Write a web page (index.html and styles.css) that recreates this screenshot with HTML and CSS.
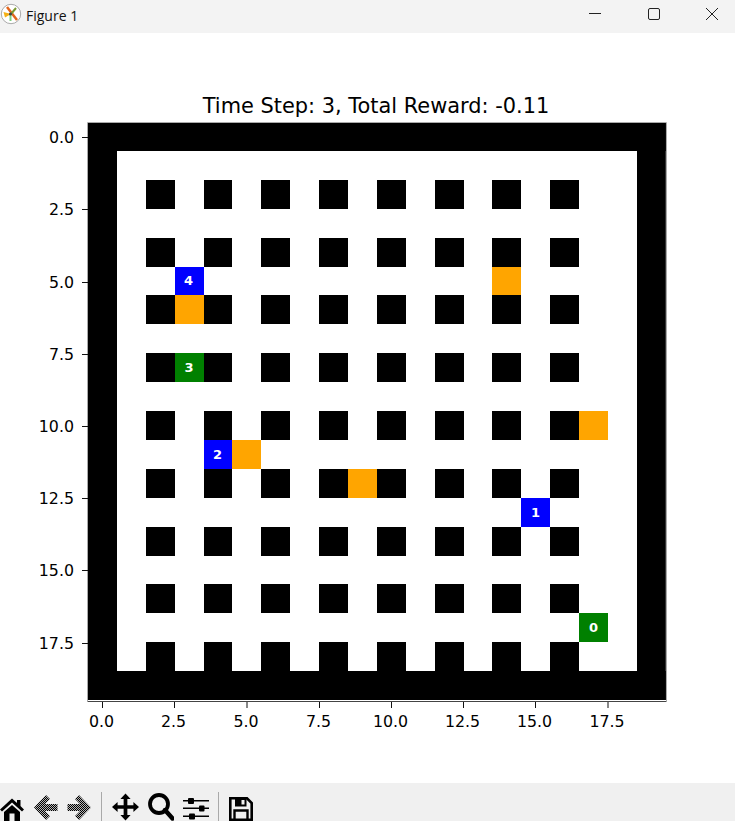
FILE: index.html
```html
<!DOCTYPE html>
<html lang="en">
<head>
  <meta charset="UTF-8" />
  <meta name="viewport" content="width=device-width, initial-scale=1" />
  <title>Figure 1</title>
  <link rel="stylesheet" href="styles.css">
</head>
<body>
  <div class="window">
    <header class="titlebar">
      <svg class="app-icon" width="22" height="22" viewBox="0 0 22 22">
        <circle cx="11" cy="11" r="9.7" fill="#fff" stroke="#aaa" />
        <path d="M3.5 9 L11 11 L5 14.5 Z" fill="#f5b014" />
        <path d="M7 4 L17 17" stroke="#e2651c" stroke-width="2.5" />
        <path d="M11 11 L16 5" stroke="#7a9a2e" stroke-width="2" />
        <path d="M10.5 11 L10.5 18" stroke="#7ed07e" stroke-width="2" />
        <circle cx="10.5" cy="11" r="1.6" fill="#444" />
      </svg>
      <span class="window-title">Figure 1</span>
      <div class="window-controls">
        <svg width="14" height="14" viewBox="0 0 14 14"><path d="M1 6.5H13" /></svg>
        <svg width="14" height="14" viewBox="0 0 14 14"><rect x="1.5" y="1.5" width="11" height="11" rx="1.5" /></svg>
        <svg width="14" height="14" viewBox="0 0 14 14"><path d="M1 1L13 13M13 1L1 13" /></svg>
      </div>
    </header>

    <main class="figure">
      <svg class="plot" width="735" height="750" viewBox="0 0 735 750">
        <text class="plot-title" x="376" y="80">Time Step: 3, Total Reward: -0.11</text>

        <!-- grid cells in data units, one unit = one cell -->
        <svg x="88" y="89" width="577.8" height="578" viewBox="0 0 20 20" preserveAspectRatio="none" shape-rendering="crispEdges">
          <rect width="20" height="20" fill="#fff" />
          <g fill="#000">
            <rect width="20" height="1" />
            <rect y="19" width="20" height="1" />
            <rect width="1" height="20" />
            <rect x="19" width="1" height="20" />
            <rect x="2" y="2" width="1" height="1" /><rect x="4" y="2" width="1" height="1" /><rect x="6" y="2" width="1" height="1" /><rect x="8" y="2" width="1" height="1" /><rect x="10" y="2" width="1" height="1" /><rect x="12" y="2" width="1" height="1" /><rect x="14" y="2" width="1" height="1" /><rect x="16" y="2" width="1" height="1" />
            <rect x="2" y="4" width="1" height="1" /><rect x="4" y="4" width="1" height="1" /><rect x="6" y="4" width="1" height="1" /><rect x="8" y="4" width="1" height="1" /><rect x="10" y="4" width="1" height="1" /><rect x="12" y="4" width="1" height="1" /><rect x="14" y="4" width="1" height="1" /><rect x="16" y="4" width="1" height="1" />
            <rect x="2" y="6" width="1" height="1" /><rect x="4" y="6" width="1" height="1" /><rect x="6" y="6" width="1" height="1" /><rect x="8" y="6" width="1" height="1" /><rect x="10" y="6" width="1" height="1" /><rect x="12" y="6" width="1" height="1" /><rect x="14" y="6" width="1" height="1" /><rect x="16" y="6" width="1" height="1" />
            <rect x="2" y="8" width="1" height="1" /><rect x="4" y="8" width="1" height="1" /><rect x="6" y="8" width="1" height="1" /><rect x="8" y="8" width="1" height="1" /><rect x="10" y="8" width="1" height="1" /><rect x="12" y="8" width="1" height="1" /><rect x="14" y="8" width="1" height="1" /><rect x="16" y="8" width="1" height="1" />
            <rect x="2" y="10" width="1" height="1" /><rect x="4" y="10" width="1" height="1" /><rect x="6" y="10" width="1" height="1" /><rect x="8" y="10" width="1" height="1" /><rect x="10" y="10" width="1" height="1" /><rect x="12" y="10" width="1" height="1" /><rect x="14" y="10" width="1" height="1" /><rect x="16" y="10" width="1" height="1" />
            <rect x="2" y="12" width="1" height="1" /><rect x="4" y="12" width="1" height="1" /><rect x="6" y="12" width="1" height="1" /><rect x="8" y="12" width="1" height="1" /><rect x="10" y="12" width="1" height="1" /><rect x="12" y="12" width="1" height="1" /><rect x="14" y="12" width="1" height="1" /><rect x="16" y="12" width="1" height="1" />
            <rect x="2" y="14" width="1" height="1" /><rect x="4" y="14" width="1" height="1" /><rect x="6" y="14" width="1" height="1" /><rect x="8" y="14" width="1" height="1" /><rect x="10" y="14" width="1" height="1" /><rect x="12" y="14" width="1" height="1" /><rect x="14" y="14" width="1" height="1" /><rect x="16" y="14" width="1" height="1" />
            <rect x="2" y="16" width="1" height="1" /><rect x="4" y="16" width="1" height="1" /><rect x="6" y="16" width="1" height="1" /><rect x="8" y="16" width="1" height="1" /><rect x="10" y="16" width="1" height="1" /><rect x="12" y="16" width="1" height="1" /><rect x="14" y="16" width="1" height="1" /><rect x="16" y="16" width="1" height="1" />
            <rect x="2" y="18" width="1" height="1" /><rect x="4" y="18" width="1" height="1" /><rect x="6" y="18" width="1" height="1" /><rect x="8" y="18" width="1" height="1" /><rect x="10" y="18" width="1" height="1" /><rect x="12" y="18" width="1" height="1" /><rect x="14" y="18" width="1" height="1" /><rect x="16" y="18" width="1" height="1" />
          </g>
          <!-- goals -->
          <g fill="#ffa500">
            <rect x="3" y="6" width="1" height="1" />
            <rect x="14" y="5" width="1" height="1" />
            <rect x="17" y="10" width="1" height="1" />
            <rect x="5" y="11" width="1" height="1" />
            <rect x="9" y="12" width="1" height="1" />
          </g>
          <!-- agents -->
          <rect x="17" y="17" width="1" height="1" fill="#008000" />
          <rect x="15" y="13" width="1" height="1" fill="#0000ff" />
          <rect x="4" y="11" width="1" height="1" fill="#0000ff" />
          <rect x="3" y="8" width="1" height="1" fill="#008000" />
          <rect x="3" y="5" width="1" height="1" fill="#0000ff" />
        </svg>

        <text class="agent-label" x="593.5" y="599">0</text>
        <text class="agent-label" x="535.5" y="484">1</text>
        <text class="agent-label" x="217.5" y="426">2</text>
        <text class="agent-label" x="189" y="339">3</text>
        <text class="agent-label" x="188.5" y="252">4</text>

        <path class="spines spine-light" d="M87.5 89.5H666.5V668M87.5 89.5V668" />
        <path class="spines" d="M87.5 668.5H666.5" />

        <path class="ticks" d="M82 104.5H88M82 176.5H88M82 249.5H88M82 321.5H88M82 393.5H88M82 465.5H88M82 537.5H88M82 610.5H88" />
        <path class="ticks" d="M102.5 669V675M174.5 669V675M247 669V675M319.5 669V675M391.5 669V675M463.5 669V675M535.5 669V675M608 669V675" />

        <g class="y-labels">
          <text x="74" y="110">0.0</text>
          <text x="74" y="182">2.5</text>
          <text x="74" y="255">5.0</text>
          <text x="74" y="327">7.5</text>
          <text x="74" y="399">10.0</text>
          <text x="74" y="471">12.5</text>
          <text x="74" y="543">15.0</text>
          <text x="74" y="616">17.5</text>
        </g>
        <g class="x-labels">
          <text x="101.5" y="694">0.0</text>
          <text x="173.5" y="694">2.5</text>
          <text x="246" y="694">5.0</text>
          <text x="318.5" y="694">7.5</text>
          <text x="390.5" y="694">10.0</text>
          <text x="462.5" y="694">12.5</text>
          <text x="534.5" y="694">15.0</text>
          <text x="607" y="694">17.5</text>
        </g>
      </svg>
    </main>

    <footer class="toolbar">
      <svg class="tool tool-home" width="24" height="24" viewBox="0 0 24 24">
        <path d="M12 1.5 L17 6 V3 H20.5 V9 L24 12.5 L22 14.5 L12 5.5 L2 14.5 L0 12.5 Z" />
        <path d="M12 8 L20 15 V24 H14.5 V16.5 H9.5 V24 H4 V15 Z" />
      </svg>
      <svg class="tool tool-back" width="24" height="25" viewBox="0 0 24 25">
        <path d="M12 0 L16 4 L11 9 H23.5 V16 H11 L16 21 L12 25 L0 12.5 Z" fill="url(#dither)" />
      </svg>
      <svg class="tool tool-forward" width="24" height="25" viewBox="0 0 24 25">
        <path d="M12 0 L8 4 L13 9 H0.5 V16 H13 L8 21 L12 25 L24 12.5 Z" fill="url(#dither)" />
      </svg>
      <span class="tool-sep"></span>
      <svg class="tool tool-move" width="27" height="28" viewBox="0 0 29 29">
        <path d="M14.5 0 L20 6 H16.5 V12.5 H23 V9 L29 14.5 L23 20 V16.5 H16.5 V23 H20 L14.5 29 L9 23 H12.5 V16.5 H6 V20 L0 14.5 L6 9 V12.5 H12.5 V6 H9 Z" />
      </svg>
      <svg class="tool tool-zoom" width="26" height="28" viewBox="0 0 26 28">
        <circle cx="11" cy="11" r="9" fill="none" stroke="#000" stroke-width="3.8" />
        <path d="M17 17 L24.5 25.5" fill="none" stroke="#000" stroke-width="4.4" stroke-linecap="round" />
      </svg>
      <svg class="tool tool-sliders" width="26" height="24" viewBox="0 0 26 24">
        <path d="M0 3H26V4.5H0ZM0 10.5H26V12H0ZM0 18.5H26V20H0Z" />
        <rect x="5" y="1" width="6" height="6" rx="1" />
        <rect x="16" y="8.5" width="5.5" height="6" rx="1" />
        <rect x="6" y="16.5" width="6" height="6" rx="1" />
      </svg>
      <span class="tool-sep"></span>
      <svg class="tool tool-save" width="24" height="24" viewBox="0 0 24 24">
        <path d="M1.3 1.3 H18 L22.7 6 V22.7 H1.3 Z" fill="none" stroke="#000" stroke-width="2.6" />
        <path d="M6 1 H17.5 V9.5 H6 Z M12.5 3 V7.5 H15.5 V3 Z" fill-rule="evenodd" />
        <path d="M5.5 22.5 V13.5 H18.5 V22.5" fill="none" stroke="#000" stroke-width="2.4" />
      </svg>
      <svg width="0" height="0" class="defs">
        <defs>
          <pattern id="dither" width="2" height="2" patternUnits="userSpaceOnUse">
            <rect width="2" height="2" fill="#b4b4b4" />
            <rect width="1" height="1" fill="#000" />
            <rect x="1" y="1" width="1" height="1" fill="#000" />
          </pattern>
        </defs>
      </svg>
    </footer>
  </div>
</body>
</html>
```

FILE: styles.css
```css
html, body {
  margin: 0;
  padding: 0;
  background: #fff;
}
.window {
  display: flex;
  flex-direction: column;
  width: 735px;
  height: 821px;
  overflow: hidden;
}
.titlebar {
  display: flex;
  align-items: center;
  flex: none;
  height: 33px;
  background: #f3f3f3;
}
.app-icon {
  flex: none;
  margin-top: -5px;
}
.window-title {
  margin-left: 4px;
  margin-top: -3px;
  font-family: "Open Sans", sans-serif;
  font-size: 14px;
  color: #111;
}
.window-controls {
  display: flex;
  gap: 44.5px;
  margin-left: auto;
  margin-right: 16px;
  margin-top: -5px;
}
.window-controls svg {
  fill: none;
  stroke: #222;
  stroke-width: 1;
}
.figure {
  flex: 1;
  min-height: 0;
  background: #fff;
}
.plot {
  display: block;
}
.plot text {
  font-family: "DejaVu Sans", sans-serif;
  fill: #000;
}
.plot-title {
  font-size: 20.9px;
  text-anchor: middle;
}
.y-labels text {
  font-size: 15.8px;
  text-anchor: end;
}
.x-labels text {
  font-size: 15.8px;
  text-anchor: middle;
}
.plot .agent-label {
  font-size: 13px;
  font-weight: bold;
  fill: #fff;
  text-anchor: middle;
}
.spines {
  fill: none;
  stroke: #444;
  stroke-width: 1;
}
.spine-light {
  stroke: #aaa;
}
.ticks {
  fill: none;
  stroke: #111;
  stroke-width: 1;
}
.toolbar {
  display: flex;
  align-items: flex-start;
  flex: none;
  height: 38px;
  background: #f0f0f0;
  position: relative;
}
.tool {
  flex: none;
  margin-top: 14px;
}
.tool-back {
  margin-left: 10px;
  margin-top: 12px;
}
.tool-forward {
  margin-left: 9px;
  margin-top: 12px;
}
.tool-move {
  margin-left: 10px;
  margin-top: 10px;
}
.tool-zoom {
  margin-left: 9px;
  margin-top: 10px;
}
.tool-sliders {
  margin-left: 9px;
}
.tool-save {
  margin-left: 10px;
}
.tool-sep {
  flex: none;
  width: 1px;
  height: 29px;
  margin: 9px 0 0 9px;
  background: #a9a9a9;
}
.tool-forward + .tool-sep {
  margin-left: 10px;
}
.defs {
  position: absolute;
}
```
